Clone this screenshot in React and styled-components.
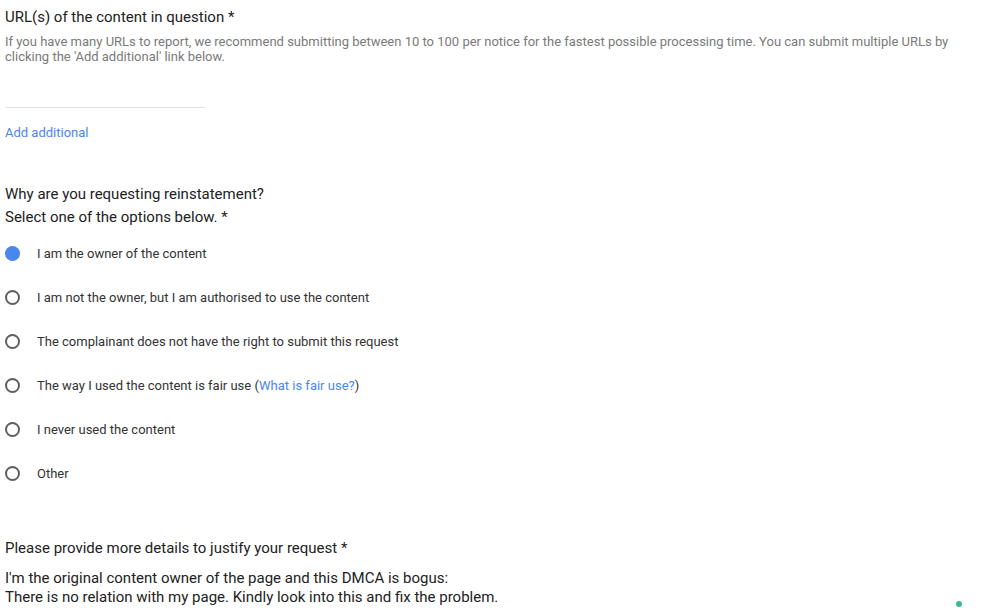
import React from 'react'
import styled, { createGlobalStyle } from 'styled-components'

const GlobalStyle = createGlobalStyle`
  body {
    margin: 0;
    background: #ffffff;
    font-family: Roboto, "Liberation Sans", Arial, sans-serif;
  }
`

const Page = styled.div`
  position: relative;
  width: 1004px;
  height: 612px;
  overflow: hidden;
  padding: 7px 0 0 5px;
  box-sizing: border-box;
`
const Label = styled.div`
  font-size: 15px;
  line-height: ${(p) => p.$lh || 20}px;
  color: #222222;
`
const Help = styled.p`
  margin: 7px 0 0;
  width: 975px;
  font-size: 13px;
  line-height: 15px;
  color: #7a7a7a;
`
const UrlInput = styled.div`
  width: 200px;
  height: 43px;
  border-bottom: 1px solid #e0e0e0;
`
const Link = styled.a`
  color: #4a86f0;
  text-decoration: none;
  cursor: pointer;
`
const AddLink = styled(Link)`
  display: block;
  margin-top: 17px;
  font-size: 13px;
  line-height: 16px;
`
const Question = styled.div`
  margin-top: 42px;
`
const Options = styled.div`
  display: flex;
  flex-direction: column;
  margin-top: 2px;
`
const Option = styled.label`
  display: flex;
  align-items: center;
  height: 44px;
  gap: 17px;
  font-size: 13px;
  color: #333333;
`
const Radio = styled.span`
  width: 15px;
  height: 15px;
  border-radius: 50%;
  box-sizing: border-box;
  flex-shrink: 0;
  background: ${(p) => (p.$checked ? '#4a86f0' : 'transparent')};
  border: ${(p) => (p.$checked ? 'none' : '2px solid #5f5f5f')};
`
const Details = styled.div`
  margin-top: 43px;
`
const Answer = styled.p`
  margin: 11px 0 0;
  font-size: 15px;
  line-height: 19px;
  color: #222222;
`
const StatusDot = styled.span`
  position: absolute;
  left: 956px;
  top: 601px;
  width: 6px;
  height: 6px;
  border-radius: 50%;
  background: #3dba8a;
`

const options = [
  { text: 'I am the owner of the content', checked: true },
  { text: 'I am not the owner, but I am authorised to use the content' },
  { text: 'The complainant does not have the right to submit this request' },
  { text: 'The way I used the content is fair use', fair: true },
  { text: 'I never used the content' },
  { text: 'Other' },
]

export default function App() {
  return (
    <>
      <GlobalStyle />
      <Page>
        <Label>URL(s) of the content in question *</Label>
        <Help>
          If you have many URLs to report, we recommend submitting between 10 to 100 per notice for the
          fastest possible processing time. You can submit multiple URLs by clicking the 'Add additional'
          link below.
        </Help>
        <UrlInput />
        <AddLink>Add additional</AddLink>

        <Question>
          <Label $lh={23}>Why are you requesting reinstatement?</Label>
          <Label $lh={23}>Select one of the options below. *</Label>
        </Question>
        <Options>
          {options.map((o, i) => (
            <Option key={i}>
              <Radio $checked={o.checked} />
              <span>
                {o.text}
                {o.fair && (
                  <>
                    {' ('}
                    <Link>What is fair use?</Link>)
                  </>
                )}
              </span>
            </Option>
          ))}
        </Options>

        <Details>
          <Label>Please provide more details to justify your request *</Label>
          <Answer>
            I'm the original content owner of the page and this DMCA is bogus:
            <br />
            There is no relation with my page. Kindly look into this and fix the problem.
          </Answer>
        </Details>
        <StatusDot />
      </Page>
    </>
  )
}
